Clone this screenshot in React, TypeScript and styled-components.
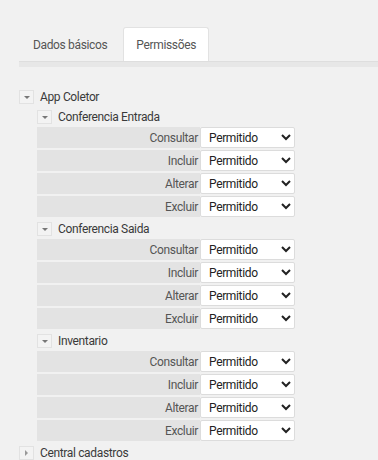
import React from 'react';
import styled, { createGlobalStyle } from 'styled-components';

const GlobalStyle = createGlobalStyle`
  html, body {
    margin: 0;
    padding: 0;
    background: #f1f1f1;
  }
  body {
    font-family: Roboto, "Liberation Sans", Arial, sans-serif;
    font-size: 12px;
    letter-spacing: -0.35px;
    color: #333;
  }
`;

const Page = styled.div`
  padding: 27px 0 0 19px;
  width: 378px;
  height: 460px;
  box-sizing: border-box;
  overflow: hidden;
`;

const TabList = styled.div`
  display: flex;
  align-items: flex-end;
`;

const Tab = styled.div<{ $active?: boolean }>`
  height: 34px;
  box-sizing: border-box;
  display: flex;
  align-items: center;
  padding: 0 ${p => (p.$active ? '12px' : '13px')};
  margin-right: 2px;
  color: #555;
  background: ${p => (p.$active ? '#fff' : 'transparent')};
  border: 1px solid ${p => (p.$active ? '#e2e2e2' : 'transparent')};
  border-bottom: none;
  border-radius: 3px 3px 0 0;
`;

const Band = styled.div`
  height: 5px;
  background: #e7e7e7;
  border-top: 1px solid #dedede;
`;

const Tree = styled.div`
  margin-top: 20px;
`;

const NodeHeader = styled.div`
  height: 20px;
  display: flex;
  align-items: center;
  gap: 6px;
  color: #3a3a3a;
`;

const Toggle = styled.span<{ $open?: boolean }>`
  width: 15px;
  height: 14px;
  box-sizing: border-box;
  border: 1px solid #e2e2e2;
  background: #f3f3f3;
  display: flex;
  align-items: center;
  justify-content: center;

  &::after {
    content: '';
    display: block;
    width: 0;
    height: 0;
    ${p =>
      p.$open
        ? `border-left: 3px solid transparent;
           border-right: 3px solid transparent;
           border-top: 3px solid #777;`
        : `border-top: 3px solid transparent;
           border-bottom: 3px solid transparent;
           border-left: 3px solid #999;`}
  }
`;

const Children = styled.div`
  padding-left: 18px;
`;

const PermRow = styled.div`
  display: grid;
  grid-template-columns: 163px 95px;
  height: 21px;
  margin-bottom: 2px;
`;

const PermLabel = styled.div`
  background: #e3e3e3;
  color: #555;
  display: flex;
  align-items: center;
  justify-content: flex-end;
  padding-right: 2px;
`;

const Select = styled.select`
  height: 21px;
  width: 95px;
  box-sizing: border-box;
  border: 1px solid #dcdcdc;
  border-radius: 2px;
  background: #fff;
  color: #222;
  font-family: Roboto, "Liberation Sans", Arial, sans-serif;
  font-size: 12px;
  letter-spacing: -0.35px;
  padding: 0 0 0 4px;
  outline: none;
`;

const actions = ['Consultar', 'Incluir', 'Alterar', 'Excluir'];

const modules = ['Conferencia Entrada', 'Conferencia Saida', 'Inventario'];

const Module = ({ name }: { name: string }) => (
  <div>
    <NodeHeader>
      <Toggle $open />
      {name}
    </NodeHeader>
    {actions.map(a => (
      <PermRow key={a}>
        <PermLabel>{a}</PermLabel>
        <Select defaultValue="Permitido">
          <option>Permitido</option>
          <option>Negado</option>
        </Select>
      </PermRow>
    ))}
  </div>
);

export default function App() {
  return (
    <Page>
      <GlobalStyle />
      <TabList>
        <Tab>Dados básicos</Tab>
        <Tab $active>Permissões</Tab>
      </TabList>
      <Band />
      <Tree>
        <NodeHeader>
          <Toggle $open />
          App Coletor
        </NodeHeader>
        <Children>
          {modules.map(m => (
            <Module key={m} name={m} />
          ))}
        </Children>
        <NodeHeader>
          <Toggle />
          Central cadastros
        </NodeHeader>
      </Tree>
    </Page>
  );
}
